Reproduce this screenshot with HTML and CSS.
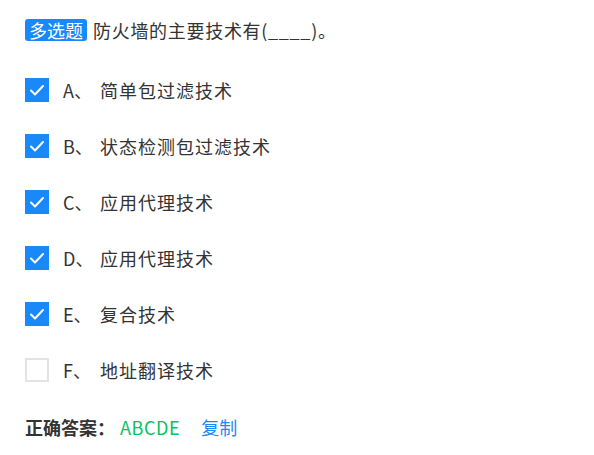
FILE: index.html
```html
<!DOCTYPE html>
<html lang="zh">
<head>
<meta charset="utf-8">
<link rel="stylesheet" href="styles.css">
</head>
<body>
<div class="question">
  <div class="title"><span class="tag">多选题</span><span class="stem">防火墙的主要技术有(____)。</span></div>
  <ul class="options">
    <li class="option"><span class="box checked"><svg viewBox="0 0 24 24" width="24" height="24"><path d="M6 12.5l4 4 8-8.5" fill="none" stroke="#fff" stroke-width="2" stroke-linecap="round" stroke-linejoin="round"/></svg></span><span class="letter">A、</span><span class="text">简单包过滤技术</span></li>
    <li class="option"><span class="box checked"><svg viewBox="0 0 24 24" width="24" height="24"><path d="M6 12.5l4 4 8-8.5" fill="none" stroke="#fff" stroke-width="2" stroke-linecap="round" stroke-linejoin="round"/></svg></span><span class="letter">B、</span><span class="text">状态检测包过滤技术</span></li>
    <li class="option"><span class="box checked"><svg viewBox="0 0 24 24" width="24" height="24"><path d="M6 12.5l4 4 8-8.5" fill="none" stroke="#fff" stroke-width="2" stroke-linecap="round" stroke-linejoin="round"/></svg></span><span class="letter">C、</span><span class="text">应用代理技术</span></li>
    <li class="option"><span class="box checked"><svg viewBox="0 0 24 24" width="24" height="24"><path d="M6 12.5l4 4 8-8.5" fill="none" stroke="#fff" stroke-width="2" stroke-linecap="round" stroke-linejoin="round"/></svg></span><span class="letter">D、</span><span class="text">应用代理技术</span></li>
    <li class="option"><span class="box checked"><svg viewBox="0 0 24 24" width="24" height="24"><path d="M6 12.5l4 4 8-8.5" fill="none" stroke="#fff" stroke-width="2" stroke-linecap="round" stroke-linejoin="round"/></svg></span><span class="letter">E、</span><span class="text">复合技术</span></li>
    <li class="option"><span class="box"></span><span class="letter">F、</span><span class="text">地址翻译技术</span></li>
  </ul>
  <div class="answer"><span class="label">正确答案：</span><span class="value">ABCDE</span><span class="copy">复制</span></div>
</div>
</body>
</html>
```
FILE: styles.css
```css
html, body { margin: 0; padding: 0; background: #fff; }
body {
  font-family: "Noto Sans CJK SC", "Noto Sans", sans-serif;
  color: #333;
}
.question { padding: 18px 25px 0 25px; }
.title { display: flex; align-items: center; height: 24px; font-size: 18px; }
.tag {
  background: #1989fa; color: #fff; font-size: 18px; line-height: 22px;
  padding: 0 4px; border-radius: 3px; margin-right: 6px;
}
.stem { letter-spacing: 0.7px; }
.options { list-style: none; margin: 36px 0 0 0; padding: 0; display: flex; flex-direction: column; gap: 32px; }
.option { display: flex; align-items: center; height: 24px; font-size: 18px; }
.box {
  width: 24px; height: 24px; box-sizing: border-box; border: 2px solid #e3e3e3;
  display: inline-flex; align-items: center; justify-content: center; flex: none;
}
.box.checked { background: #1989fa; border: none; }
.letter { margin-left: 14px; width: 37px; }
.text { letter-spacing: 1px; }
.answer { margin-top: 33px; display: flex; align-items: center; font-size: 18px; height: 24px; }
.label { font-weight: bold; color: #333; }
.value { color: #07c160; margin-left: 5px; letter-spacing: 0.6px; }
.copy { color: #1989fa; margin-left: 21px; }
```
